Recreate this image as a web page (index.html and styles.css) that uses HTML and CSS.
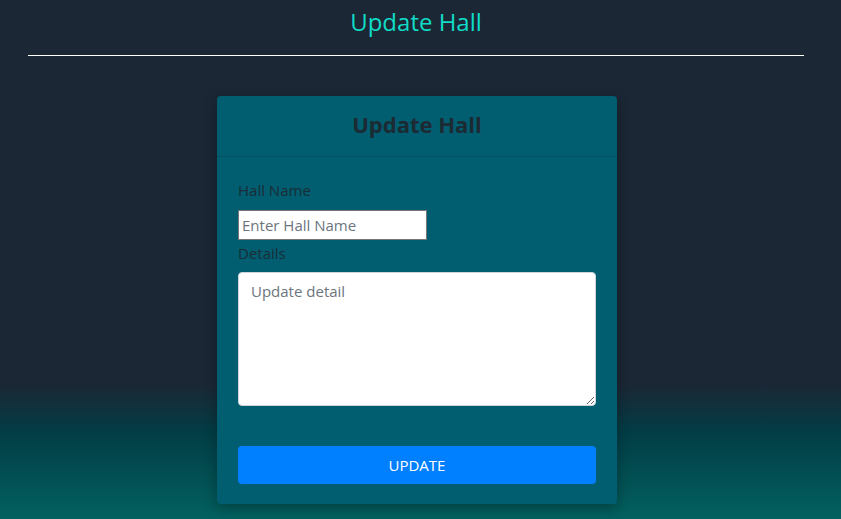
FILE: index.html
```html
<!DOCTYPE html>
<html>
<head>
<meta charset="utf-8">
<link rel="stylesheet" href="styles.css">
</head>
<body>
<div class="page">
  <h1 class="page-title">Update Hall</h1>
  <hr class="rule">
  <div class="card">
    <div class="card-header"><h2 class="card-title">Update Hall</h2></div>
    <form class="card-body">
      <label class="label">Hall Name</label>
      <input class="name-input" type="text" placeholder="Enter Hall Name">
      <label class="label label-details">Details</label>
      <textarea class="details" placeholder="Update detail"></textarea>
      <button class="btn" type="button">UPDATE</button>
    </form>
  </div>
</div>
</body>
</html>
```
FILE: styles.css
```css
html, body {
  margin: 0;
  padding: 0;
  height: 100%;
}
body {
  font-family: "Open Sans", "Noto Sans", sans-serif;
  background: linear-gradient(180deg, #1b2735 0px, #1b2735 385px, #023d46 432px, #03615f 519px);
  overflow: hidden;
}
.page {
  width: 776px;
  margin-left: 28px;
  display: flex;
  flex-direction: column;
  align-items: center;
}
.page-title {
  margin: 5px 0 0;
  font-size: 24px;
  font-weight: 400;
  line-height: 33px;
  color: #10dcc8;
}
.rule {
  align-self: stretch;
  margin: 17px 0 0;
  border: 0;
  border-top: 1px solid #ffffff;
  height: 0;
}
.card {
  margin-top: 40px;
  margin-left: 2px;
  width: 400px;
  background: #015e70;
  border-radius: 4px;
  box-shadow: 0 4px 14px rgba(0, 0, 0, 0.3);
}
.card-header {
  height: 61px;
  box-sizing: border-box;
  padding-bottom: 4px;
  display: flex;
  align-items: center;
  justify-content: center;
  border-bottom: 1px solid rgba(0, 0, 0, 0.15);
}
.card-title {
  margin: 0;
  font-size: 22px;
  font-weight: 700;
  color: #1c2a33;
}
.card-body {
  display: flex;
  flex-direction: column;
  align-items: flex-start;
  padding: 20px 21px 20px 21px;
}
.label {
  font-size: 15px;
  line-height: 24px;
  color: #1b2d36;
  margin-top: 1px;
  margin-bottom: 8px;
}
.label-details {
  margin-top: 1px;
  margin-bottom: 7px;
}
.name-input {
  box-sizing: border-box;
  width: 189px;
  height: 30px;
  margin: 0;
  padding: 1px 3px;
  border: 1px solid #767676;
  font-family: inherit;
  font-size: 15px;
  background: #fff;
}
.name-input::placeholder, .details::placeholder {
  color: #6c757d;
}
.details {
  box-sizing: border-box;
  width: 358px;
  height: 134px;
  margin: 0;
  padding: 6px 12px;
  border: 1px solid #ced4da;
  border-radius: 4px;
  font-family: inherit;
  font-size: 15px;
  line-height: 24px;
  background: #fff;
}
.btn {
  margin-top: 40px;
  width: 358px;
  height: 38px;
  border: 0;
  border-radius: 4px;
  background: #0080ff;
  color: #fff;
  font-family: inherit;
  font-size: 15px;
}
```
